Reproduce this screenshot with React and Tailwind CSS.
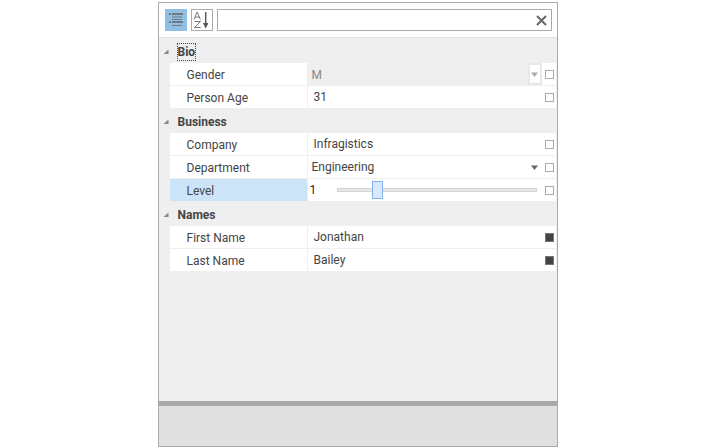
import React from "react";

function Check({ on }) {
  return (
    <span className={`mr-[2px] block h-[9px] w-[9px] border ${on ? "border-[#777] bg-[#444]" : "border-[#aaa] bg-white"}`}></span>
  );
}

function Arrow({ color = "#666" }) {
  return (
    <svg width="7" height="5" viewBox="0 0 7 5" className="block">
      <path d="M0 0.5h7L3.5 5z" fill={color} />
    </svg>
  );
}

function GroupHeader({ title, focused }) {
  return (
    <div className="flex h-[25px] items-center">
      <svg width="7" height="7" viewBox="0 0 7 7" className="ml-[4px] mt-[1px] block">
        <path d="M5.5 1.5v4.5H0.5z" fill="#888" />
      </svg>
      <span className={`ml-[8px] mt-[2px] font-bold leading-[16px] text-[#444] ${focused ? "outline-1 outline-dotted outline-[#444]" : ""}`}>
        {title}
      </span>
    </div>
  );
}

function Row({ label, selected, last, children, check, disabled }) {
  return (
    <div className={`ml-[11px] mr-[1px] flex ${last ? "h-[22px]" : "h-[23px] border-b border-[#efefef]"}`}>
      <div className={`flex h-[22px] w-[137px] items-center pl-[17px] pt-[2px] text-[#444] ${selected ? "bg-[#cce4f7]" : "bg-white"}`}>
        {label}
      </div>
      <div className={`ml-[1px] flex h-[22px] flex-1 items-center ${disabled ? "bg-[#efefef]" : "bg-white"}`}>
        <div className="flex h-full min-w-0 flex-1 items-center">{children}</div>
        <div className="flex h-full w-[14px] items-center justify-end bg-white">
          <Check on={check} />
        </div>
      </div>
    </div>
  );
}

function App() {
  return (
    <div className="flex h-[448px] w-[715px] justify-center bg-white pt-[2px] font-['Roboto',sans-serif] text-[12px]">
      <div className="flex h-[445px] w-[400px] flex-col border border-[#aaaaaa] bg-[#efefef]">
        {/* toolbar */}
        <div className="flex h-[35px] items-center gap-[4px] border-b border-[#e0e0e0] bg-white pl-[6px] pr-[5px]">
          <button className="flex h-[22px] w-[22px] items-center justify-center bg-[#90bfe4]">
            <svg width="22" height="22" viewBox="0 0 22 22" className="block">
              <path d="M4 4h2v2H4zM7 4h11v2H7zM7 7.5h10v1H7zM7 10h10v1H7zM4 12h2v2H4zM7 12h11v2H7zM7 16h10v1H7z" fill="#6f7880" />
            </svg>
          </button>
          <button className="flex h-[22px] w-[22px] items-center justify-center border border-[#aaaaaa] bg-white">
            <svg width="20" height="20" viewBox="0 0 20 20" className="block">
              <path d="M13.7 2v12" stroke="#555" strokeWidth="1.4" />
              <path d="M11 13h5.4l-2.7 5.5z" fill="#555" />
              <path d="M2 9.5L5.2 2l3.2 7.5M3 7h4.4" stroke="#777" strokeWidth="1" fill="none" />
              <path d="M2.5 11.5h6L2.5 17.5h6.2" stroke="#777" strokeWidth="1" fill="none" />
            </svg>
          </button>
          <div className="flex h-[22px] flex-1 items-center justify-end border border-[#aaaaaa] bg-white pr-[4px]">
            <svg width="11" height="11" viewBox="0 0 11 11" className="block">
              <path d="M1 1l9 9M10 1l-9 9" stroke="#666" strokeWidth="2" />
            </svg>
          </div>
        </div>

        {/* property grid */}
        <div className="flex-1">
          <GroupHeader title="Bio" focused />
          <Row label="Gender" disabled>
            <span className="pl-[4px] pt-[1px] text-[#888]">M</span>
            <span className="ml-auto flex h-full w-[14px] items-center justify-center border-2 border-[#e8e8e8] bg-white">
              <Arrow color="#aaa" />
            </span>
          </Row>
          <Row label="Person Age" last>
            <span className="pl-[6px] text-[#444]">31</span>
          </Row>

          <GroupHeader title="Business" />
          <Row label="Company">
            <span className="pl-[6px] text-[#444]">Infragistics</span>
          </Row>
          <Row label="Department">
            <span className="pl-[4px] text-[#444]">Engineering</span>
            <span className="ml-auto mr-[1px] flex w-[13px] justify-center">
              <Arrow />
            </span>
          </Row>
          <Row label="Level" selected last>
            <span className="w-[29px] pl-[2px] text-[#222]">1</span>
            <div className="relative mr-[5px] h-[4px] flex-1 border border-[#d4d4d4] bg-[#e6e6e6]">
              <span className="absolute left-[34px] top-[-8px] h-[18px] w-[11px] border border-[#7eb4ea] bg-[#d9e9fb]"></span>
            </div>
          </Row>

          <GroupHeader title="Names" />
          <Row label="First Name" check>
            <span className="pl-[6px] text-[#444]">Jonathan</span>
          </Row>
          <Row label="Last Name" check last>
            <span className="pl-[6px] text-[#444]">Bailey</span>
          </Row>
        </div>

        {/* description panel */}
        <div className="h-[45px] border-t-[5px] border-[#a8a8a8] bg-[#e0e0e0]"></div>
      </div>
    </div>
  );
}

export default App;
